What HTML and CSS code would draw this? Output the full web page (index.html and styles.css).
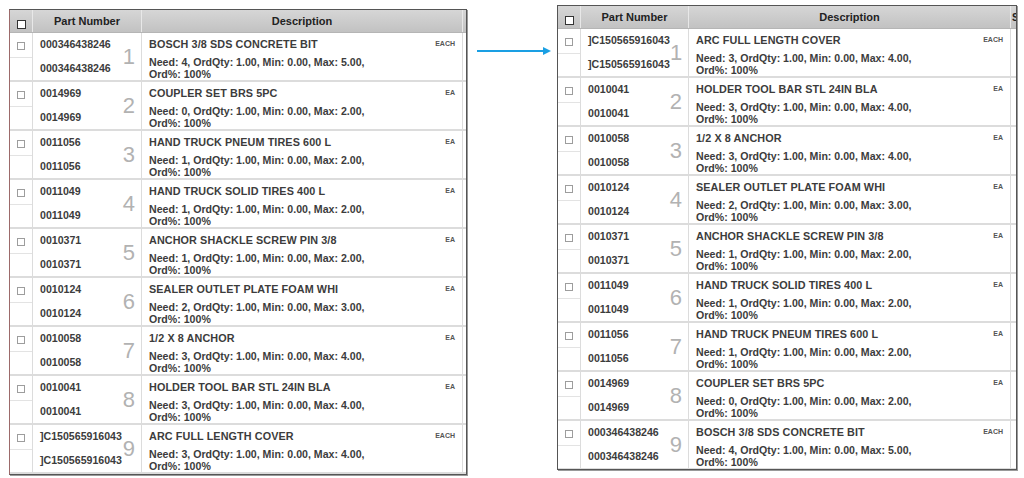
FILE: index.html
```html
<!DOCTYPE html>
<html>
<head>
<meta charset="utf-8">
<link rel="stylesheet" href="styles.css">
</head>
<body>
<div class="stage">
  <div class="grid grid-left">
    <div class="ghead">
      <div class="hc hc-check"><span class="box box-head"></span></div>
      <div class="hc">Part Number</div>
      <div class="hc">Description</div>
      <div class="hc hc-extra"></div>
    </div>
    <div class="row"><div class="c-check"><div class="ck-top"><span class="box"></span></div><div class="ck-bot"></div></div><div class="c-part"><div class="pn"><div>000346438246</div><div>000346438246</div></div><div class="seq">1</div></div><div class="c-desc"><div class="d-top"><span class="d-name">BOSCH 3/8 SDS CONCRETE BIT</span><span class="unit">EACH</span></div><div class="d-line">Need: 4, OrdQty: 1.00, Min: 0.00, Max: 5.00,</div><div class="d-line">Ord%: 100%</div></div><div class="c-extra"></div></div>
    <div class="row"><div class="c-check"><div class="ck-top"><span class="box"></span></div><div class="ck-bot"></div></div><div class="c-part"><div class="pn"><div>0014969</div><div>0014969</div></div><div class="seq">2</div></div><div class="c-desc"><div class="d-top"><span class="d-name">COUPLER SET BRS 5PC</span><span class="unit">EA</span></div><div class="d-line">Need: 0, OrdQty: 1.00, Min: 0.00, Max: 2.00,</div><div class="d-line">Ord%: 100%</div></div><div class="c-extra"></div></div>
    <div class="row"><div class="c-check"><div class="ck-top"><span class="box"></span></div><div class="ck-bot"></div></div><div class="c-part"><div class="pn"><div>0011056</div><div>0011056</div></div><div class="seq">3</div></div><div class="c-desc"><div class="d-top"><span class="d-name">HAND TRUCK PNEUM TIRES 600 L</span><span class="unit">EA</span></div><div class="d-line">Need: 1, OrdQty: 1.00, Min: 0.00, Max: 2.00,</div><div class="d-line">Ord%: 100%</div></div><div class="c-extra"></div></div>
    <div class="row"><div class="c-check"><div class="ck-top"><span class="box"></span></div><div class="ck-bot"></div></div><div class="c-part"><div class="pn"><div>0011049</div><div>0011049</div></div><div class="seq">4</div></div><div class="c-desc"><div class="d-top"><span class="d-name">HAND TRUCK SOLID TIRES 400 L</span><span class="unit">EA</span></div><div class="d-line">Need: 1, OrdQty: 1.00, Min: 0.00, Max: 2.00,</div><div class="d-line">Ord%: 100%</div></div><div class="c-extra"></div></div>
    <div class="row"><div class="c-check"><div class="ck-top"><span class="box"></span></div><div class="ck-bot"></div></div><div class="c-part"><div class="pn"><div>0010371</div><div>0010371</div></div><div class="seq">5</div></div><div class="c-desc"><div class="d-top"><span class="d-name">ANCHOR SHACKLE SCREW PIN 3/8</span><span class="unit">EA</span></div><div class="d-line">Need: 1, OrdQty: 1.00, Min: 0.00, Max: 2.00,</div><div class="d-line">Ord%: 100%</div></div><div class="c-extra"></div></div>
    <div class="row"><div class="c-check"><div class="ck-top"><span class="box"></span></div><div class="ck-bot"></div></div><div class="c-part"><div class="pn"><div>0010124</div><div>0010124</div></div><div class="seq">6</div></div><div class="c-desc"><div class="d-top"><span class="d-name">SEALER OUTLET PLATE FOAM WHI</span><span class="unit">EA</span></div><div class="d-line">Need: 2, OrdQty: 1.00, Min: 0.00, Max: 3.00,</div><div class="d-line">Ord%: 100%</div></div><div class="c-extra"></div></div>
    <div class="row"><div class="c-check"><div class="ck-top"><span class="box"></span></div><div class="ck-bot"></div></div><div class="c-part"><div class="pn"><div>0010058</div><div>0010058</div></div><div class="seq">7</div></div><div class="c-desc"><div class="d-top"><span class="d-name">1/2 X 8 ANCHOR</span><span class="unit">EA</span></div><div class="d-line">Need: 3, OrdQty: 1.00, Min: 0.00, Max: 4.00,</div><div class="d-line">Ord%: 100%</div></div><div class="c-extra"></div></div>
    <div class="row"><div class="c-check"><div class="ck-top"><span class="box"></span></div><div class="ck-bot"></div></div><div class="c-part"><div class="pn"><div>0010041</div><div>0010041</div></div><div class="seq">8</div></div><div class="c-desc"><div class="d-top"><span class="d-name">HOLDER TOOL BAR STL 24IN BLA</span><span class="unit">EA</span></div><div class="d-line">Need: 3, OrdQty: 1.00, Min: 0.00, Max: 4.00,</div><div class="d-line">Ord%: 100%</div></div><div class="c-extra"></div></div>
    <div class="row"><div class="c-check"><div class="ck-top"><span class="box"></span></div><div class="ck-bot"></div></div><div class="c-part"><div class="pn"><div>]C150565916043</div><div>]C150565916043</div></div><div class="seq">9</div></div><div class="c-desc"><div class="d-top"><span class="d-name">ARC FULL LENGTH COVER</span><span class="unit">EACH</span></div><div class="d-line">Need: 3, OrdQty: 1.00, Min: 0.00, Max: 4.00,</div><div class="d-line">Ord%: 100%</div></div><div class="c-extra"></div></div>
  </div>

  <div class="arrow"><span class="arrow-line"></span><span class="arrow-head"></span></div>

  <div class="grid grid-right">
    <div class="ghead">
      <div class="hc hc-check"><span class="box box-head"></span></div>
      <div class="hc">Part Number</div>
      <div class="hc">Description</div>
      <div class="hc hc-extra">S</div>
    </div>
    <div class="row"><div class="c-check"><div class="ck-top"><span class="box"></span></div><div class="ck-bot"></div></div><div class="c-part"><div class="pn"><div>]C150565916043</div><div>]C150565916043</div></div><div class="seq">1</div></div><div class="c-desc"><div class="d-top"><span class="d-name">ARC FULL LENGTH COVER</span><span class="unit">EACH</span></div><div class="d-line">Need: 3, OrdQty: 1.00, Min: 0.00, Max: 4.00,</div><div class="d-line">Ord%: 100%</div></div><div class="c-extra"></div></div>
    <div class="row"><div class="c-check"><div class="ck-top"><span class="box"></span></div><div class="ck-bot"></div></div><div class="c-part"><div class="pn"><div>0010041</div><div>0010041</div></div><div class="seq">2</div></div><div class="c-desc"><div class="d-top"><span class="d-name">HOLDER TOOL BAR STL 24IN BLA</span><span class="unit">EA</span></div><div class="d-line">Need: 3, OrdQty: 1.00, Min: 0.00, Max: 4.00,</div><div class="d-line">Ord%: 100%</div></div><div class="c-extra"></div></div>
    <div class="row"><div class="c-check"><div class="ck-top"><span class="box"></span></div><div class="ck-bot"></div></div><div class="c-part"><div class="pn"><div>0010058</div><div>0010058</div></div><div class="seq">3</div></div><div class="c-desc"><div class="d-top"><span class="d-name">1/2 X 8 ANCHOR</span><span class="unit">EA</span></div><div class="d-line">Need: 3, OrdQty: 1.00, Min: 0.00, Max: 4.00,</div><div class="d-line">Ord%: 100%</div></div><div class="c-extra"></div></div>
    <div class="row"><div class="c-check"><div class="ck-top"><span class="box"></span></div><div class="ck-bot"></div></div><div class="c-part"><div class="pn"><div>0010124</div><div>0010124</div></div><div class="seq">4</div></div><div class="c-desc"><div class="d-top"><span class="d-name">SEALER OUTLET PLATE FOAM WHI</span><span class="unit">EA</span></div><div class="d-line">Need: 2, OrdQty: 1.00, Min: 0.00, Max: 3.00,</div><div class="d-line">Ord%: 100%</div></div><div class="c-extra"></div></div>
    <div class="row"><div class="c-check"><div class="ck-top"><span class="box"></span></div><div class="ck-bot"></div></div><div class="c-part"><div class="pn"><div>0010371</div><div>0010371</div></div><div class="seq">5</div></div><div class="c-desc"><div class="d-top"><span class="d-name">ANCHOR SHACKLE SCREW PIN 3/8</span><span class="unit">EA</span></div><div class="d-line">Need: 1, OrdQty: 1.00, Min: 0.00, Max: 2.00,</div><div class="d-line">Ord%: 100%</div></div><div class="c-extra"></div></div>
    <div class="row"><div class="c-check"><div class="ck-top"><span class="box"></span></div><div class="ck-bot"></div></div><div class="c-part"><div class="pn"><div>0011049</div><div>0011049</div></div><div class="seq">6</div></div><div class="c-desc"><div class="d-top"><span class="d-name">HAND TRUCK SOLID TIRES 400 L</span><span class="unit">EA</span></div><div class="d-line">Need: 1, OrdQty: 1.00, Min: 0.00, Max: 2.00,</div><div class="d-line">Ord%: 100%</div></div><div class="c-extra"></div></div>
    <div class="row"><div class="c-check"><div class="ck-top"><span class="box"></span></div><div class="ck-bot"></div></div><div class="c-part"><div class="pn"><div>0011056</div><div>0011056</div></div><div class="seq">7</div></div><div class="c-desc"><div class="d-top"><span class="d-name">HAND TRUCK PNEUM TIRES 600 L</span><span class="unit">EA</span></div><div class="d-line">Need: 1, OrdQty: 1.00, Min: 0.00, Max: 2.00,</div><div class="d-line">Ord%: 100%</div></div><div class="c-extra"></div></div>
    <div class="row"><div class="c-check"><div class="ck-top"><span class="box"></span></div><div class="ck-bot"></div></div><div class="c-part"><div class="pn"><div>0014969</div><div>0014969</div></div><div class="seq">8</div></div><div class="c-desc"><div class="d-top"><span class="d-name">COUPLER SET BRS 5PC</span><span class="unit">EA</span></div><div class="d-line">Need: 0, OrdQty: 1.00, Min: 0.00, Max: 2.00,</div><div class="d-line">Ord%: 100%</div></div><div class="c-extra"></div></div>
    <div class="row"><div class="c-check"><div class="ck-top"><span class="box"></span></div><div class="ck-bot"></div></div><div class="c-part"><div class="pn"><div>000346438246</div><div>000346438246</div></div><div class="seq">9</div></div><div class="c-desc"><div class="d-top"><span class="d-name">BOSCH 3/8 SDS CONCRETE BIT</span><span class="unit">EACH</span></div><div class="d-line">Need: 4, OrdQty: 1.00, Min: 0.00, Max: 5.00,</div><div class="d-line">Ord%: 100%</div></div><div class="c-extra"></div></div>
  </div>
</div>
</body>
</html>
```

FILE: styles.css
```css
* { box-sizing: border-box; }
html, body { margin: 0; padding: 0; background: #fff; }
body {
  width: 1024px;
  height: 478px;
  overflow: hidden;
  font-family: "Liberation Sans", Arial, sans-serif;
  color: #3c3c3c;
}
.stage {
  display: flex;
  align-items: flex-start;
}

/* ---------- grid panel ---------- */
.grid {
  border: 1px solid #555;
  box-shadow: 1px 1px 0 #9a9a9a;
  overflow: hidden;
  background: #fff;
}
.grid-left {
  width: 458px;
  height: 466px;
  margin: 9px 0 0 9px;
  border-left-color: #9c6a6a;
  --cols: 23px 109px 1fr 3px;
}
.grid-right {
  width: 460px;
  height: 465px;
  margin: 5px 0 0 6px;
  --cols: 23px 108px 1fr 5px;
}

.ghead {
  display: grid;
  grid-template-columns: var(--cols);
  height: 23px;
  background: linear-gradient(#d6d6d6, #c2c2c2);
  border-bottom: 1px solid #b5b5b5;
}
.hc {
  display: flex;
  align-items: center;
  justify-content: center;
  font-size: 11px;
  font-weight: bold;
  color: #222;
  border-right: 1px solid #e8e8e8;
  white-space: nowrap;
  overflow: hidden;
}
.hc-check { align-items: flex-end; padding-bottom: 3px; }
.hc-extra {
  border-right: none;
  justify-content: flex-start;
  padding-left: 1px;
  font-size: 10px;
}

.box {
  display: block;
  width: 8px;
  height: 8px;
  border: 1px solid #9d9d9d;
  background: #fff;
}
.box-head {
  width: 9px;
  height: 9px;
  border: 1px solid #333;
}

/* ---------- rows ---------- */
.row {
  display: grid;
  grid-template-columns: var(--cols);
  height: 49px;
  border-bottom: 2px solid #dcdcdc;
  font-size: 10.6px;
  font-weight: bold;
}
.c-check {
  display: flex;
  flex-direction: column;
  border-right: 1px solid #dcdcdc;
}
.ck-top {
  height: 24px;
  display: flex;
  align-items: center;
  justify-content: center;
  padding-top: 1px;
}
.ck-bot {
  flex: 1;
  border-top: 1px solid #e3e3e3;
}

.c-part {
  display: flex;
  align-items: center;
  justify-content: space-between;
  padding: 0 6px 0 7px;
  border-right: 1px solid #dcdcdc;
}
.pn {
  align-self: flex-start;
  padding-top: 5px;
  display: flex;
  flex-direction: column;
  gap: 12px;
  line-height: 12px;
  white-space: nowrap;
}
.seq {
  font-size: 22px;
  font-weight: normal;
  color: #b2b2b2;
  line-height: 22px;
  padding-top: 1px;
}

.c-desc {
  padding: 5px 7px 0 7px;
  border-right: 1px solid #dcdcdc;
  line-height: 12px;
  white-space: nowrap;
  overflow: hidden;
}
.d-top {
  display: flex;
  justify-content: space-between;
  align-items: center;
  margin-bottom: 6px;
}
.d-name { font-size: 10.8px; letter-spacing: 0.1px; }
.unit {
  font-size: 7px;
  color: #555;
}
.d-line { font-size: 10.6px; }

/* ---------- arrow ---------- */
.arrow {
  display: flex;
  align-items: center;
  margin: 47px 0 0 10px;
  height: 8px;
}
.arrow-line {
  display: block;
  width: 66px;
  height: 2px;
  background: #1a9fe3;
}
.arrow-head {
  display: block;
  width: 0;
  height: 0;
  border-top: 4px solid transparent;
  border-bottom: 4px solid transparent;
  border-left: 8px solid #1a9fe3;
}
```
